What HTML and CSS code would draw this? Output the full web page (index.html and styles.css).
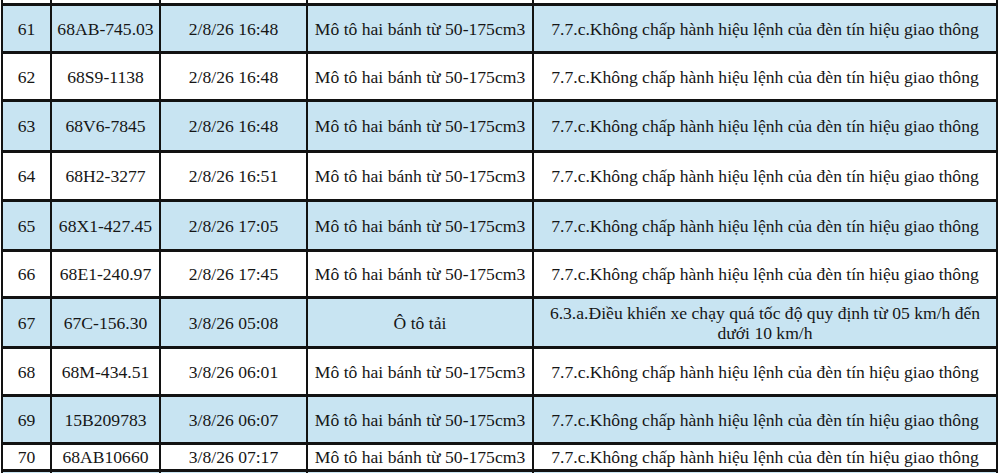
FILE: index.html
```html
<!DOCTYPE html>
<html lang="vi">
<head>
<meta charset="utf-8">
<title>Danh sách vi phạm</title>
<link rel="stylesheet" href="styles.css">
</head>
<body>
<div class="page">
<table class="grid">
<colgroup>
<col class="c-stt"><col class="c-plate"><col class="c-time"><col class="c-type"><col class="c-desc">
</colgroup>
<tbody>
<tr class="sliver-top"><td></td><td></td><td></td><td></td><td></td></tr>
<tr class="blue h45"><td>61</td><td>68AB-745.03</td><td>2/8/26 16:48</td><td>Mô tô hai bánh từ 50-175cm3</td><td>7.7.c.Không chấp hành hiệu lệnh của đèn tín hiệu giao thông</td></tr>
<tr class="h45"><td>62</td><td>68S9-1138</td><td>2/8/26 16:48</td><td>Mô tô hai bánh từ 50-175cm3</td><td>7.7.c.Không chấp hành hiệu lệnh của đèn tín hiệu giao thông</td></tr>
<tr class="blue h48"><td>63</td><td>68V6-7845</td><td>2/8/26 16:48</td><td>Mô tô hai bánh từ 50-175cm3</td><td>7.7.c.Không chấp hành hiệu lệnh của đèn tín hiệu giao thông</td></tr>
<tr class="h46"><td>64</td><td>68H2-3277</td><td>2/8/26 16:51</td><td>Mô tô hai bánh từ 50-175cm3</td><td>7.7.c.Không chấp hành hiệu lệnh của đèn tín hiệu giao thông</td></tr>
<tr class="blue h47"><td>65</td><td>68X1-427.45</td><td>2/8/26 17:05</td><td>Mô tô hai bánh từ 50-175cm3</td><td>7.7.c.Không chấp hành hiệu lệnh của đèn tín hiệu giao thông</td></tr>
<tr class="h44"><td>66</td><td>68E1-240.97</td><td>2/8/26 17:45</td><td>Mô tô hai bánh từ 50-175cm3</td><td>7.7.c.Không chấp hành hiệu lệnh của đèn tín hiệu giao thông</td></tr>
<tr class="blue h47"><td>67</td><td>67C-156.30</td><td>3/8/26 05:08</td><td>Ô tô tải</td><td class="two">6.3.a.Điều khiển xe chạy quá tốc độ quy định từ 05 km/h đến dưới 10 km/h</td></tr>
<tr class="h45"><td>68</td><td>68M-434.51</td><td>3/8/26 06:01</td><td>Mô tô hai bánh từ 50-175cm3</td><td>7.7.c.Không chấp hành hiệu lệnh của đèn tín hiệu giao thông</td></tr>
<tr class="blue h45"><td>69</td><td>15B209783</td><td>3/8/26 06:07</td><td>Mô tô hai bánh từ 50-175cm3</td><td>7.7.c.Không chấp hành hiệu lệnh của đèn tín hiệu giao thông</td></tr>
<tr class="h24"><td>70</td><td>68AB10660</td><td>3/8/26 07:17</td><td>Mô tô hai bánh từ 50-175cm3</td><td>7.7.c.Không chấp hành hiệu lệnh của đèn tín hiệu giao thông</td></tr>
<tr class="blue h45"><td></td><td></td><td></td><td></td><td></td></tr>
</tbody>
</table>
</div>
</body>
</html>
```
FILE: styles.css
```css
html, body {
  margin: 0;
  padding: 0;
  background: #ffffff;
}
.page {
  width: 998px;
  height: 473px;
  overflow: hidden;
}
.grid {
  border-collapse: collapse;
  table-layout: fixed;
  width: 995px;
  margin-left: 1px;
  font-family: "Liberation Serif", "Times New Roman", serif;
  font-size: 17.6px;
  color: #161616;
}
.c-stt { width: 49px; }
.c-plate { width: 109px; }
.c-time { width: 147px; }
.c-type { width: 226px; }
.c-desc { width: 464px; }
.grid td {
  border-left: 2px solid #121212;
  border-right: 2px solid #121212;
  border-top: 3px solid #121212;
  border-bottom: 3px solid #121212;
  padding: 0 4px;
  text-align: center;
  vertical-align: middle;
  white-space: nowrap;
  line-height: 20px;
}
.grid td.two {
  white-space: normal;
  padding: 0 8px;
}
.sliver-top td {
  border-top: none;
  height: 3px;
  padding: 0;
}
.blue td { background: #c8e4f2; }
.h44 td { height: 44px; }
.h45 td { height: 45px; }
.h46 td { height: 46px; }
.h47 td { height: 47px; }
.h48 td { height: 48px; }
.h24 td { height: 24px; }
```
